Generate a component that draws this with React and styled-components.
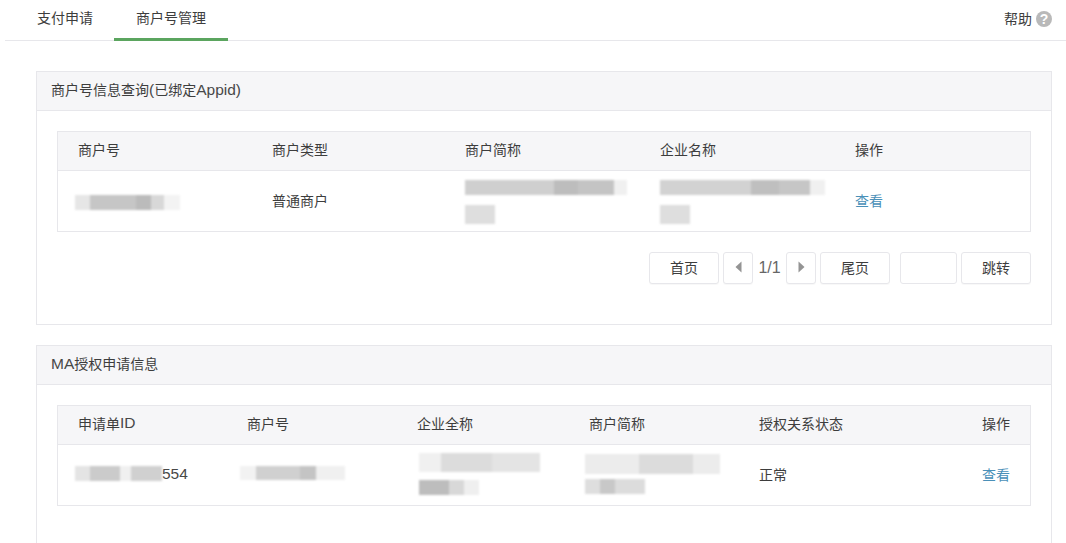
import React from 'react';
import styled, { createGlobalStyle } from 'styled-components';

const GlobalStyle = createGlobalStyle`
  html, body {
    margin: 0;
    padding: 0;
    height: 543px;
    overflow: hidden;
    background: #fff;
    color: #3d3d3d;
    font-family: "Liberation Sans", "Noto Sans CJK SC", sans-serif;
    font-size: 14px;
  }
`;

const TabBar = styled.div`
  display: flex;
  align-items: flex-start;
  height: 40px;
  margin-left: 5px;
  padding-left: 32px;
  border-bottom: 1px solid #e7e7eb;
`;
const Tab = styled.div`
  box-sizing: border-box;
  height: 41px;
  width: ${props => props.$width}px;
  padding-left: ${props => props.$inset || 0}px;
  line-height: 36px;
  border-bottom: 3px solid ${props => (props.$active ? '#5ba55f' : 'transparent')};
`;
const Help = styled.div`
  display: flex;
  align-items: center;
  gap: 4px;
  height: 38px;
  margin-left: auto;
  padding-right: 14px;
`;
const HelpLabel = styled.span`
  padding-bottom: 3px;
`;
const HelpMark = styled.span`
  width: 16px;
  height: 16px;
  border-radius: 50%;
  background: #b9b9b9;
  color: #fff;
  font-size: 14px;
  font-weight: 700;
  line-height: 16px;
  text-align: center;
`;

const Latin = styled.span`
  font-size: 15.5px;
  color: #484848;
`;

const Card = styled.section`
  box-sizing: border-box;
  width: 1016px;
  margin: ${props => props.$top}px 0 0 36px;
  height: ${props => props.$height}px;
  border: 1px solid #e7e7eb;
  ${props => props.$open && 'border-bottom: 0;'}
`;
const CardHeader = styled.h3`
  box-sizing: border-box;
  height: 39px;
  margin: 0;
  padding-left: 14px;
  background: #f6f6f8;
  border-bottom: 1px solid #e7e7eb;
  font-size: 14px;
  font-weight: 400;
  line-height: 36px;
`;
const CardBody = styled.div`
  padding: 20px 20px 0;
`;

const Table = styled.div`
  box-sizing: border-box;
  width: 974px;
  border: 1px solid #e7e7eb;
`;
const Row = styled.div`
  box-sizing: border-box;
  display: grid;
  grid-template-columns: ${props => props.$cols};
  height: ${props => (props.$head ? 39 : 60)}px;
  background: ${props => (props.$head ? '#f6f6f8' : '#fff')};
  border-bottom: ${props => (props.$head ? '1px solid #e7e7eb' : '0')};
`;
const Cell = styled.div`
  display: flex;
  flex-direction: ${props => (props.$stack ? 'column' : 'row')};
  align-items: ${props => (props.$stack ? 'flex-start' : 'center')};
  justify-content: ${props => (props.$end ? 'flex-end' : props.$stack ? 'center' : 'flex-start')};
  padding: 0 ${props => (props.$end ? 20 : 0)}px ${props => (props.$stack || props.$raw ? 0 : props.$body ? 2 : 4)}px ${props => (props.$end ? 0 : 20)}px;
`;
const Link = styled.a`
  color: #4a90b8;
`;

// 打码区域，reference 里是模糊处理过的内容
const Redacted = styled.div`
  flex: none;
  width: ${props => props.$w}px;
  height: ${props => props.$h}px;
  margin: ${props => props.$m || '0'};
  background: ${props => props.$bg};
  filter: blur(0.8px);
`;

const Pager = styled.div`
  display: flex;
  align-items: center;
  justify-content: flex-end;
  width: 974px;
  margin-top: 20px;
`;
const PageButton = styled.button`
  box-sizing: border-box;
  display: flex;
  align-items: center;
  justify-content: center;
  width: ${props => props.$w || 70}px;
  height: 32px;
  margin-left: ${props => props.$gap ?? 4}px;
  padding: 0 0 3px;
  background: #fff;
  border: 1px solid #e7e7eb;
  border-radius: 3px;
  box-shadow: 0 1px 1px rgba(0, 0, 0, 0.03);
  color: #3d3d3d;
  font: inherit;
`;
const PageInput = styled.div`
  box-sizing: border-box;
  width: 57px;
  height: 32px;
  margin-left: 10px;
  border: 1px solid #e7e7eb;
  border-radius: 3px;
`;
const PageNum = styled.span`
  width: 33px;
  padding-bottom: 1px;
  text-align: center;
  color: #666;
  font-size: 16px;
`;

const Arrow = ({ flip }) => (
  <svg width="7" height="12" viewBox="0 0 7 12" style={flip ? { transform: 'scaleX(-1)' } : undefined}>
    <path d="M6.5 0.5 L0.5 6 L6.5 11.5 Z" fill="#949494" />
  </svg>
);

const colsA = '194px 193px 195px 195px 1fr';
const colsB = '169px 170px 172px 170px 1fr 1fr';

const App = () => (
  <>
    <GlobalStyle />
    <TabBar>
      <Tab $width={77}>支付申请</Tab>
      <Tab $width={114} $inset={22} $active>商户号管理</Tab>
      <Help>
        <HelpLabel>帮助</HelpLabel>
        <HelpMark>?</HelpMark>
      </Help>
    </TabBar>

    <Card $top={30} $height={254}>
      <CardHeader>商户号信息查询<Latin>(</Latin>已绑定<Latin>Appid)</Latin></CardHeader>
      <CardBody>
        <Table>
          <Row $head $cols={colsA}>
            <Cell>商户号</Cell>
            <Cell>商户类型</Cell>
            <Cell>商户简称</Cell>
            <Cell>企业名称</Cell>
            <Cell>操作</Cell>
          </Row>
          <Row $cols={colsA}>
            <Cell $raw>
              <Redacted
                $w={105}
                $h={15}
                $m="3px 0 0 -3px"
                $bg="linear-gradient(90deg, #e6e6e6 0 14%, #c6c6c6 14% 58%, #bbb 58% 72%, #d8d8d8 72% 85%, #f3f3f3 85%)"
              />
            </Cell>
            <Cell $body>普通商户</Cell>
            <Cell $stack>
              <Redacted
                $w={162}
                $h={15}
                $m="2px 0 0"
                $bg="linear-gradient(90deg, #cfcfcf 0 55%, #bdbdbd 55% 70%, #c4c4c4 70% 92%, #f0f0f0 92%)"
              />
              <Redacted $w={30} $h={19} $m="10px 0 0" $bg="#dedede" />
            </Cell>
            <Cell $stack>
              <Redacted
                $w={165}
                $h={15}
                $m="2px 0 0"
                $bg="linear-gradient(90deg, #d2d2d2 0 55%, #bfbfbf 55% 72%, #c6c6c6 72% 91%, #f0f0f0 91%)"
              />
              <Redacted $w={30} $h={19} $m="10px 0 0" $bg="#dedede" />
            </Cell>
            <Cell $body><Link>查看</Link></Cell>
          </Row>
        </Table>
        <Pager>
          <PageButton>首页</PageButton>
          <PageButton $w={30}><Arrow /></PageButton>
          <PageNum>1/1</PageNum>
          <PageButton $w={30} $gap={0}><Arrow flip /></PageButton>
          <PageButton>尾页</PageButton>
          <PageInput />
          <PageButton>跳转</PageButton>
        </Pager>
      </CardBody>
    </Card>

    <Card $top={20} $height={198} $open>
      <CardHeader><Latin>MA</Latin>授权申请信息</CardHeader>
      <CardBody>
        <Table>
          <Row $head $cols={colsB}>
            <Cell>申请单<Latin>ID</Latin></Cell>
            <Cell>商户号</Cell>
            <Cell>企业全称</Cell>
            <Cell>商户简称</Cell>
            <Cell>授权关系状态</Cell>
            <Cell $end>操作</Cell>
          </Row>
          <Row $cols={colsB}>
            <Cell $body>
              <Redacted
                $w={87}
                $h={15}
                $m="-2px 0 0 -3px"
                $bg="linear-gradient(90deg, #e4e4e4 0 17%, #cbcbcb 17% 52%, #f0f0f0 52% 64%, #d0d0d0 64% 100%)"
              />
              <Latin>554</Latin>
            </Cell>
            <Cell>
              <Redacted
                $w={105}
                $h={14}
                $m="0 0 0 -7px"
                $bg="linear-gradient(90deg, #f2f2f2 0 15%, #d0d0d0 15% 57%, #c4c4c4 57% 72%, #f0f0f0 72%)"
              />
            </Cell>
            <Cell $stack>
              <Redacted
                $w={121}
                $h={19}
                $m="-3px 0 0 2px"
                $bg="linear-gradient(90deg, #f0f0f0 0 18%, #dcdcdc 18% 60%, #e4e4e4 60% 100%)"
              />
              <Redacted
                $w={60}
                $h={15}
                $m="8px 0 0 2px"
                $bg="linear-gradient(90deg, #bdbdbd 0 50%, #d8d8d8 50% 75%, #efefef 75%)"
              />
            </Cell>
            <Cell $stack>
              <Redacted
                $w={135}
                $h={20}
                $m="-3px 0 0 -4px"
                $bg="linear-gradient(90deg, #ececec 0 40%, #dcdcdc 40% 80%, #ececec 80%)"
              />
              <Redacted
                $w={60}
                $h={15}
                $m="5px 0 0 -4px"
                $bg="linear-gradient(90deg, #dedede 0 25%, #c8c8c8 25% 50%, #dcdcdc 50%)"
              />
            </Cell>
            <Cell $body>正常</Cell>
            <Cell $end $body><Link>查看</Link></Cell>
          </Row>
        </Table>
      </CardBody>
    </Card>
  </>
);

export default App;
